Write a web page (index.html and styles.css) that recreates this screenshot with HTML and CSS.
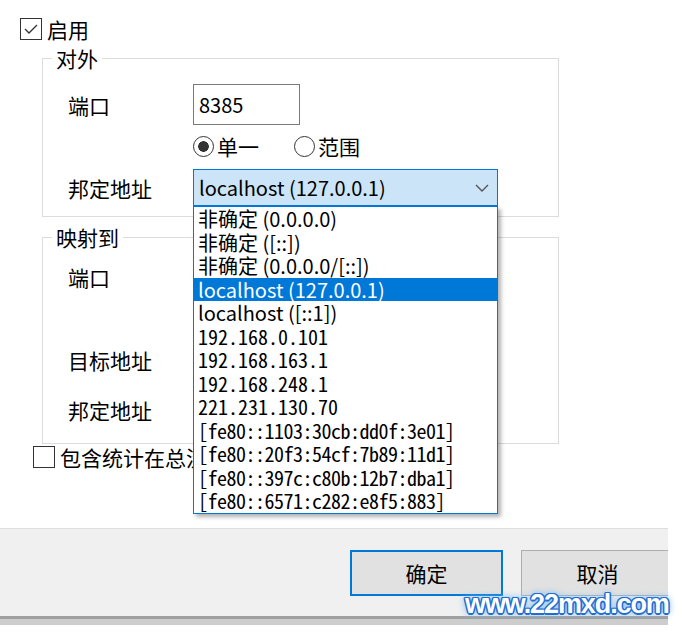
FILE: index.html
```html
<!DOCTYPE html>
<html lang="zh-CN">
<head>
    <meta charset="UTF-8">
    <meta name="viewport" content="width=device-width, initial-scale=1.0">
    <title>端口映射</title>
    <link rel="stylesheet" href="styles.css">
</head>
<body>
<div class="dialog">

    <label class="check enable">
        <svg class="box" width="22" height="22" viewBox="0 0 22 22">
            <rect x="0.5" y="0.5" width="21" height="21" fill="#fff" stroke="#333"/>
            <polyline points="5,11 9,15 17,7" fill="none" stroke="#333" stroke-width="1.3"/>
        </svg>
        <span>启用</span>
    </label>

    <fieldset class="group">
        <legend>对外</legend>
        <div class="row port-row">
            <span class="label">端口</span>
            <div class="input">8385</div>
        </div>
        <div class="row radio-row">
            <span class="radio checked"></span><span>单一</span>
            <span class="radio second"></span><span>范围</span>
        </div>
        <div class="row bind-row">
            <span class="label">邦定地址</span>
            <div class="combo">
                <span>localhost (127.0.0.1)</span>
                <svg width="14" height="8" viewBox="0 0 14 8">
                    <polyline points="1,1 7,7 13,1" fill="none" stroke="#555" stroke-width="1.4"/>
                </svg>
                <!-- open dropdown list -->
                <ul class="dropdown">
                    <li>非确定 (0.0.0.0)</li>
                    <li>非确定 ([::])</li>
                    <li>非确定 (0.0.0.0/[::])</li>
                    <li class="sel">localhost (127.0.0.1)</li>
                    <li>localhost ([::1])</li>
                    <li class="ip">192.168.0.101</li>
                    <li class="ip">192.168.163.1</li>
                    <li class="ip">192.168.248.1</li>
                    <li class="ip">221.231.130.70</li>
                    <li class="ip v6">[fe80::1103:30cb:dd0f:3e01]</li>
                    <li class="ip v6">[fe80::20f3:54cf:7b89:11d1]</li>
                    <li class="ip v6">[fe80::397c:c80b:12b7:dba1]</li>
                    <li class="ip v6">[fe80::6571:c282:e8f5:883]</li>
                </ul>
            </div>
        </div>
    </fieldset>

    <fieldset class="group mapping">
        <legend>映射到</legend>
        <div class="row map-port">
            <span class="label">端口</span>
        </div>
        <div class="row map-target">
            <span class="label">目标地址</span>
        </div>
        <div class="row map-bind">
            <span class="label">邦定地址</span>
        </div>
    </fieldset>

    <label class="check include">
        <svg class="box" width="22" height="22" viewBox="0 0 22 22">
            <rect x="0.5" y="0.5" width="21" height="21" fill="#fff" stroke="#333"/>
        </svg>
        <span>包含统计在总流量中</span>
    </label>

    <div class="footer">
        <button class="btn primary">确定</button>
        <button class="btn">取消</button>
    </div>

    <div class="watermark">www.22mxd.com</div>
</div>
</body>
</html>
```

FILE: styles.css
```css
body {
    margin: 0;
    background: #fff;
    color: #000;
    font-family: "Noto Sans CJK SC", sans-serif;
    font-size: 21px;
}
.dialog {
    position: relative;
    height: 634px;
    box-sizing: border-box;
    padding-top: 17px;
    overflow: hidden;
}
.check {
    display: flex;
    align-items: center;
    gap: 5px;
    height: 24px;
    line-height: 24px;
}
.check .box {
    flex: none;
}
.enable {
    margin-left: 20px;
}
.group {
    box-sizing: border-box;
    width: 517px;
    min-width: 0;
    margin: 5px 0 0 42px;
    padding: 0 0 10px 25px;
    border: 1px solid #dcdcdc;
}
.group legend {
    padding: 0 4px;
    margin-left: -16px;
    line-height: 24px;
}
.row {
    display: flex;
    align-items: center;
}
.label {
    flex: none;
    width: 125px;
}
.port-row {
    margin-top: 14px;
    height: 41px;
}
.input {
    box-sizing: border-box;
    width: 107px;
    height: 41px;
    border: 1px solid #7a7a7a;
    padding-left: 5px;
    line-height: 39px;
    font-size: 20px;
}
.radio-row {
    margin-top: 9px;
    height: 24px;
    padding-left: 125px;
}
.radio {
    flex: none;
    box-sizing: border-box;
    width: 21px;
    height: 21px;
    margin-right: 3px;
    border: 1px solid #333;
    border-radius: 50%;
    background: #fff;
}
.radio.checked {
    background: radial-gradient(circle, #333 0 5px, #fff 5.6px);
}
.radio.second {
    margin-left: 35px;
}
.bind-row {
    margin-top: 11px;
    height: 37px;
}
.combo {
    position: relative;
    box-sizing: border-box;
    width: 305px;
    height: 37px;
    padding: 0 8px 0 5px;
    border: 1px solid #0078d7;
    background: #cce4f7;
    font-size: 20px;
    display: flex;
    align-items: center;
    justify-content: space-between;
}
.dropdown {
    position: absolute;
    top: 36px;
    left: -1px;
    z-index: 10;
    box-sizing: border-box;
    width: 305px;
    margin: 0;
    padding: 0;
    list-style: none;
    background: #fff;
    border: 1px solid #0078d7;
    box-shadow: 3px 3px 4px rgba(0, 0, 0, 0.3);
}
.dropdown li {
    height: 23.5px;
    line-height: 23.5px;
    padding-left: 4px;
    white-space: nowrap;
}
.dropdown .sel {
    background: #0078d7;
    color: #fff;
}
.dropdown .ip {
    font-family: "Noto Sans Mono CJK SC", "Liberation Mono", monospace;
}
.dropdown .v6 {
    letter-spacing: -0.5px;
}
.mapping {
    margin-top: 8px;
    padding-bottom: 15px;
}
.map-port {
    margin-top: 9px;
    height: 37px;
}
.map-target {
    margin-top: 46px;
    height: 37px;
}
.map-bind {
    margin-top: 13px;
    height: 37px;
}
.include {
    margin-left: 33px;
    height: 26px;
}
.footer {
    box-sizing: border-box;
    width: 668px;
    height: 91px;
    margin-top: 58px;
    padding: 21px 0 0 350px;
    background: #f0f0f0;
    border-top: 1px solid #dfdfdf;
    border-bottom: 3px solid #a0a0a0;
    box-shadow: 0 6px 0 #cdcdcd;
    display: flex;
    gap: 18px;
    overflow: hidden;
}
.btn {
    flex: none;
    box-sizing: border-box;
    width: 153px;
    height: 46px;
    background: #e1e1e1;
    border: 1px solid #adadad;
    font-family: inherit;
    font-size: 21px;
    color: #000;
}
.btn.primary {
    border: 2px solid #0078d7;
}
.watermark {
    position: absolute;
    left: 465px;
    top: 589px;
    font-family: "Liberation Sans", sans-serif;
    font-weight: bold;
    font-size: 27px;
    letter-spacing: -1.1px;
    color: #fff;
    text-shadow: 1.5px 0 0 #1f6fd1, -1.5px 0 0 #1f6fd1, 0 1.5px 0 #1f6fd1, 0 -1.5px 0 #1f6fd1,
        1px 1px 0 #1f6fd1, -1px -1px 0 #1f6fd1, 1px -1px 0 #1f6fd1, -1px 1px 0 #1f6fd1,
        0 0 6px #6fb2f2, 0 0 8px #9ccaf5;
}
```
